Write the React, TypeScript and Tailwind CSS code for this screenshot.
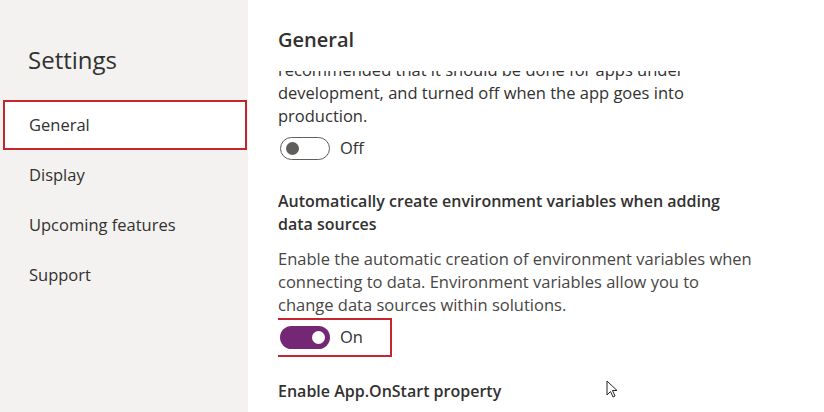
import React from 'react';

const font = { fontFamily: '"Open Sans", "Noto Sans", Arial, sans-serif' };

function Toggle({ on }: { on: boolean }) {
  return (
    <div className="flex items-center gap-[10px]">
      {on ? (
        <div className="w-[50px] h-[23px] rounded-full bg-[#742774] flex items-center justify-end pr-[5px]">
          <div className="w-[13px] h-[13px] rounded-full bg-white" />
        </div>
      ) : (
        <div className="w-[50px] h-[23px] rounded-full border border-[#605e5c] flex items-center pl-[5px]">
          <div className="w-[13px] h-[13px] rounded-full bg-[#605e5c]" />
        </div>
      )}
      <span className="text-[16.5px] text-[#323130]">{on ? 'On' : 'Off'}</span>
    </div>
  );
}

const navItems = ['General', 'Display', 'Upcoming features', 'Support'];

export default function App() {
  return (
    <div className="w-[824px] h-[412px] flex bg-white overflow-hidden text-[#323130]" style={font}>
      <aside className="w-[248px] shrink-0 bg-[#f3f2f1] flex flex-col pt-[42px]">
        <h1 className="pl-[28px] text-[24px] leading-[36px] text-[#323130] mb-[22px]">Settings</h1>
        <nav className="flex flex-col">
          {navItems.map((item, i) => (
            <div
              key={item}
              className={
                i === 0
                  ? 'ml-[3px] mr-[1px] h-[50px] flex items-center pl-[24px] bg-white border-2 border-[#c4262e] text-[16.5px]'
                  : 'h-[50px] flex items-center pl-[29px] text-[16.5px] text-[#323130]'
              }
            >
              {item}
            </div>
          ))}
        </nav>
      </aside>

      <main className="flex-1 flex flex-col pl-[30px]">
        <h2 className="pt-[26px] h-[71px] text-[20px] font-semibold leading-[28px] text-[#323130]">General</h2>
        <div className="flex-1 overflow-hidden">
          <div className="-mt-[13px] w-[490px]">
            <p className="text-[16.5px] leading-[23px]">
              recommended that it should be done for apps under
              <br />
              development, and turned off when the app goes into
              <br />
              production.
            </p>
            <div className="mt-[9px] ml-[2px]">
              <Toggle on={false} />
            </div>

            <h3 className="mt-[29px] text-[16px] font-semibold leading-[23px]">
              Automatically create environment variables when adding
              <br />
              data sources
            </h3>
            <p className="mt-[11px] text-[16.5px] leading-[23px] text-[#484644]">
              Enable the automatic creation of environment variables when
              <br />
              connecting to data. Environment variables allow you to
              <br />
              change data sources within solutions.
            </p>
            <div className="mt-[2px] -ml-[8px] w-[122px] h-[39px] border-2 border-[#c4262e] flex items-center pl-[8px]">
              <Toggle on />
            </div>

            <div className="flex items-start mt-[23px]">
              <h3 className="text-[16px] font-semibold leading-[23px]">Enable App.OnStart property</h3>
              <svg width="12" height="19" viewBox="0 0 12 19" className="ml-[105px] mt-[0px]">
                <path d="M1 1 L1 15 L4.5 11.5 L7 17 L9 16 L6.5 10.5 L11 10.5 Z" fill="white" stroke="#222" strokeWidth="1" strokeLinejoin="round" />
              </svg>
            </div>
          </div>
        </div>
      </main>
    </div>
  );
}
